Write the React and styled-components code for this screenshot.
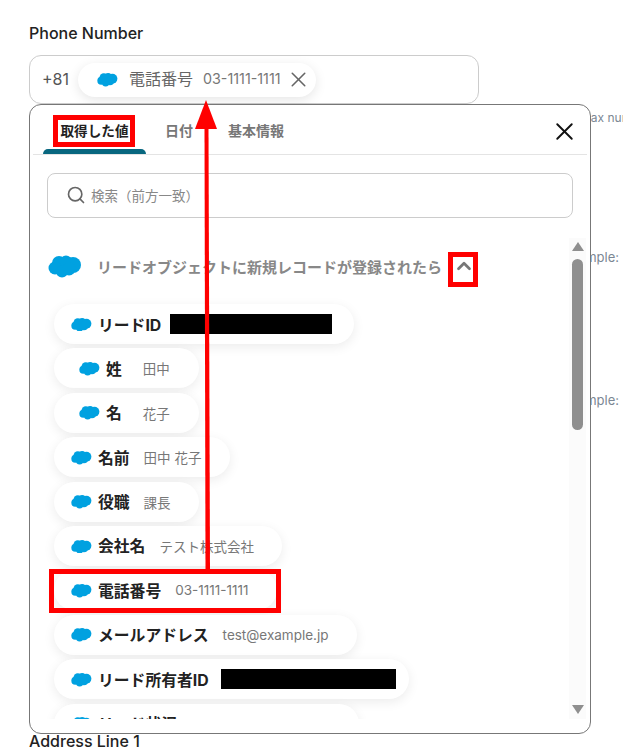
import React from 'react'
import styled, { createGlobalStyle } from 'styled-components'
import { LuSearch, LuX, LuChevronUp } from 'react-icons/lu'

const GlobalStyle = createGlobalStyle`
  html, body {
    margin: 0;
    padding: 0;
    height: 752px;
    overflow: hidden;
    background: #fff;
    font-family: Inter, "Noto Sans CJK JP", sans-serif;
  }
`

const items = [
  { label: 'リードID', width: 300, masked: 162, maskGap: 9 },
  { label: '姓', value: '田中', width: 145, center: true },
  { label: '名', value: '花子', width: 145, center: true },
  { label: '名前', value: '田中 花子', width: 176 },
  { label: '役職', value: '課長', width: 145 },
  { label: '会社名', value: 'テスト株式会社', width: 228 },
  { label: '電話番号', value: '03-1111-1111', width: 223 },
  { label: 'メールアドレス', value: 'test@example.jp', width: 303 },
  { label: 'リード所有者ID', width: 355, masked: 175, maskGap: 12 },
  { label: 'リード状況', value: 'Open - Not Contacted', width: 305 },
]

const Cloud = ({ size = 21 }) => (
  <CloudSvg width={size} viewBox="0 0 34 24" fill="#00a1e0">
    <circle cx="11" cy="9" r="7" />
    <circle cx="18" cy="7.5" r="6" />
    <circle cx="25" cy="11" r="8" />
    <circle cx="7" cy="14" r="6.5" />
    <circle cx="14" cy="17.5" r="6" />
    <circle cx="21" cy="15" r="6.5" />
  </CloudSvg>
)

const App = () => {
  return (
    <Page>
      <GlobalStyle />
      <FieldLabel>Phone Number</FieldLabel>
      <PhoneBox>
        <Prefix>+81</Prefix>
        <SelectedChip>
          <Cloud />
          <SelectedName>電話番号</SelectedName>
          <SelectedValue>03-1111-1111</SelectedValue>
          <LuX size={25} color="#666" strokeWidth={1.5} />
        </SelectedChip>
      </PhoneBox>
      <Hint $top={6} $indent={580} $size={12}>Max number of digits</Hint>
      <Hint $top={125} $indent={563}>Example:</Hint>
      <Hint $top={128} $indent={563}>Example:</Hint>
      <BottomLabel>Address Line 1</BottomLabel>

      <Popup>
        <TabBar>
          <Tab $active>取得した値</Tab>
          <Tab>日付</Tab>
          <Tab>基本情報</Tab>
          <CloseButton><LuX size={29} color="#111" strokeWidth={1.6} /></CloseButton>
        </TabBar>
        <SearchBox>
          <LuSearch size={20} color="#666" />
          <SearchText>検索（前方一致）</SearchText>
        </SearchBox>
        <Body>
          <Content>
            <SectionHeader>
              <Cloud size={34} />
              <SectionTitle>リードオブジェクトに新規レコードが登録されたら</SectionTitle>
              <LuChevronUp size={22} color="#777" strokeWidth={3} />
            </SectionHeader>
            <List>
              {items.map(item => (
                <Chip key={item.label} $width={item.width} $center={item.center}>
                  <Cloud />
                  <ChipLabel>{item.label}</ChipLabel>
                  {item.masked
                    ? <Mask $gap={item.maskGap} style={{ width: item.masked }} />
                    : <ChipValue $center={item.center}>{item.value}</ChipValue>}
                </Chip>
              ))}
            </List>
          </Content>
          <Scrollbar>
            <ArrowUp />
            <Thumb />
            <ArrowDown />
          </Scrollbar>
        </Body>
      </Popup>

      <RedBox $left={53} $top={115} $w={82} $h={32} />
      <RedBox $left={448} $top={252} $w={30} $h={35} />
      <RedBox $left={49} $top={569} $w={232} $h={44} />
      <Arrow width="30" height="480" viewBox="0 0 30 480">
        <polygon points="12.5,28 16.5,28 18,472 13.5,472" fill="#ff0000" />
        <polygon points="14,0 25,29 3,29" fill="#ff0000" />
      </Arrow>
    </Page>
  )
}

const Page = styled.div`
  position: relative;
  width: 623px;
  height: 752px;
  padding: 24px 0 0 29px;
  box-sizing: border-box;
  overflow: hidden;
`

const FieldLabel = styled.div`
  font-size: 16px;
  line-height: 18px;
  font-weight: 500;
  color: #222;
`

const PhoneBox = styled.div`
  display: flex;
  align-items: center;
  width: 450px;
  height: 49px;
  margin-top: 13px;
  padding-left: 12px;
  box-sizing: border-box;
  border: 1px solid #ccc;
  border-radius: 12px;
`

const Prefix = styled.span`
  margin-bottom: 2px;
  font-size: 16px;
  color: #555;
`

const SelectedChip = styled.div`
  display: flex;
  align-items: center;
  width: 238px;
  height: 34px;
  margin-left: 9px;
  padding-left: 19px;
  box-sizing: border-box;
  border-radius: 17px;
  background: #fff;
  box-shadow: 0 3px 12px rgba(0, 0, 0, 0.1);
`

const SelectedName = styled.span`
  margin: 0 0 3px 11px;
  font-size: 16px;
  color: #666;
  white-space: nowrap;
`

const SelectedValue = styled.span`
  margin: 0 5px 2px 10px;
  font-size: 14.3px;
  color: #777;
  white-space: nowrap;
`

const Hint = styled.div`
  margin-top: ${({ $top }) => $top}px;
  padding-left: ${({ $indent }) => $indent - 29}px;
  font-size: ${({ $size }) => $size || 13}px;
  line-height: 15px;
  color: #7b8794;
  white-space: nowrap;
`

const BottomLabel = styled.div`
  margin-top: 324px;
  font-size: 16px;
  line-height: 18px;
  font-weight: 500;
  color: #222;
`

const Popup = styled.div`
  position: absolute;
  left: 29px;
  top: 104px;
  width: 562px;
  height: 630px;
  box-sizing: border-box;
  border: 1px solid #777;
  border-radius: 12px;
  background: #fff;
  overflow: hidden;
`

const TabBar = styled.div`
  position: relative;
  display: flex;
  align-items: flex-end;
  height: 49px;
  margin: 0 3px;
  padding-left: 10px;
  border-bottom: 1px solid #e4e4e4;
`

const Tab = styled.div`
  position: relative;
  width: ${({ $active }) => ($active ? '103px' : 'auto')};
  height: 44px;
  margin-right: ${({ $active }) => ($active ? '19px' : '35px')};
  padding-top: 11px;
  box-sizing: border-box;
  text-align: center;
  font-size: ${({ $active }) => ($active ? '13.6px' : '14px')};
  line-height: 20px;
  font-weight: 700;
  color: ${({ $active }) => ($active ? '#222' : '#777')};

  &::after {
    content: '';
    display: ${({ $active }) => ($active ? 'block' : 'none')};
    position: absolute;
    left: 0;
    right: 0;
    bottom: 0;
    height: 5px;
    border-radius: 5px 5px 0 0;
    background: #08677f;
  }
`

const CloseButton = styled.div`
  position: absolute;
  right: 8px;
  top: 12px;
  display: flex;
`

const SearchBox = styled.div`
  display: flex;
  align-items: center;
  height: 45px;
  margin: 18px 17px 0 17px;
  padding: 0 0 2px 18px;
  box-sizing: border-box;
  border: 1px solid #ccc;
  border-radius: 8px;
`

const SearchText = styled.span`
  margin-left: 5px;
  font-size: 13.5px;
  color: #888;
`

const Body = styled.div`
  display: flex;
  height: 482px;
  margin-top: 19px;
`

const Content = styled.div`
  flex: 1;
  min-width: 0;
  overflow: hidden;
`

const SectionHeader = styled.div`
  display: flex;
  align-items: center;
  height: 58px;
  padding-left: 18px;
`

const SectionTitle = styled.span`
  margin: 0 11px 0 15px;
  font-size: 15px;
  font-weight: 700;
  color: #888;
  white-space: nowrap;
`

const List = styled.div`
  display: flex;
  flex-direction: column;
  align-items: flex-start;
  gap: 4.4px;
  margin-top: 9px;
  padding-left: 24px;
`

const Chip = styled.div`
  display: flex;
  flex: none;
  align-items: center;
  width: ${({ $width }) => $width}px;
  height: 40px;
  padding-left: ${({ $center }) => ($center ? '25px' : '17px')};
  box-sizing: border-box;
  border-radius: 20px;
  background: #fff;
  box-shadow: 0 3px 12px rgba(0, 0, 0, 0.08);
`

const CloudSvg = styled.svg`
  flex: none;
  display: block;
`

const ChipLabel = styled.span`
  margin-left: 6px;
  font-size: 15.8px;
  font-weight: 700;
  color: #222;
  white-space: nowrap;
`

const ChipValue = styled.span`
  margin-left: ${({ $center }) => ($center ? '21px' : '14px')};
  font-size: 13.5px;
  color: #777;
  white-space: nowrap;
`

const Mask = styled.div`
  flex: none;
  height: 20px;
  margin-left: ${({ $gap }) => $gap}px;
  background: #000;
`

const Scrollbar = styled.div`
  display: flex;
  flex: none;
  flex-direction: column;
  align-items: center;
  width: 17px;
  height: 481px;
  margin-top: 1px;
  margin-right: 4px;
  background: #fbfbfb;
`

const ArrowUp = styled.div`
  margin-top: 4px;
  border-left: 6px solid transparent;
  border-right: 6px solid transparent;
  border-bottom: 9px solid #8f8f8f;
`

const Thumb = styled.div`
  width: 11px;
  height: 171px;
  margin-top: 8px;
  border-radius: 6px;
  background: #8f8f8f;
`

const ArrowDown = styled.div`
  margin-top: auto;
  margin-bottom: 5px;
  border-left: 6px solid transparent;
  border-right: 6px solid transparent;
  border-top: 9px solid #8f8f8f;
`

const RedBox = styled.div`
  position: absolute;
  left: ${({ $left }) => $left}px;
  top: ${({ $top }) => $top}px;
  width: ${({ $w }) => $w}px;
  height: ${({ $h }) => $h}px;
  box-sizing: border-box;
  border: 5px solid #ff0000;
`

const Arrow = styled.svg`
  position: absolute;
  left: 192px;
  top: 100px;
`

export default App
